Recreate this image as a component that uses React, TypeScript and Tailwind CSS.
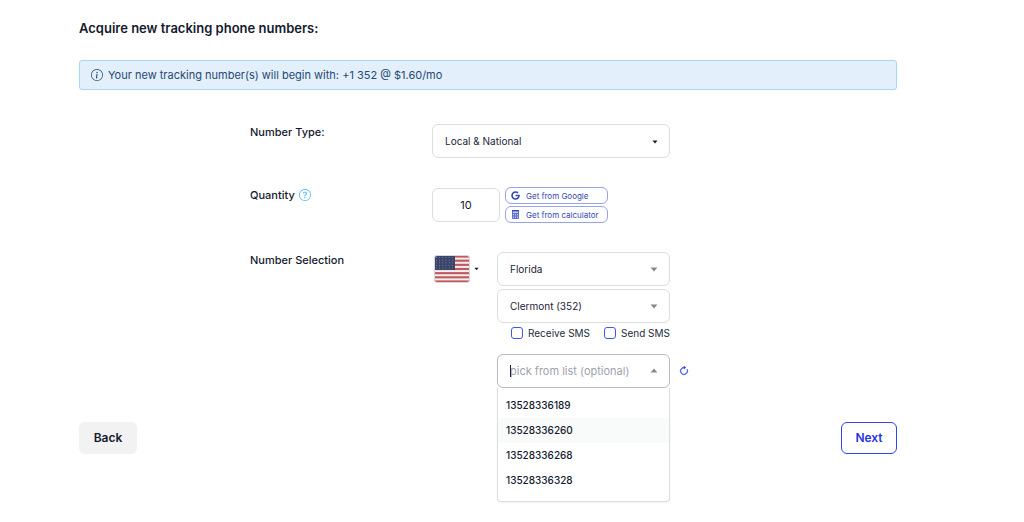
import { useState, type ReactNode, type SelectHTMLAttributes } from 'react'
import { BsArrowClockwise, BsInfoCircle, BsQuestionCircle } from 'react-icons/bs'
import { FaGoogle } from 'react-icons/fa'

const NUMBERS = ['13528336189', '13528336260', '13528336268', '13528336328']

function Caret({ className, up = false }: { className: string; up?: boolean }) {
  return (
    <svg viewBox="0 0 8 5" className={className} fill="currentColor" aria-hidden="true">
      <path d={up ? 'M0.6 4.5 L4 0.6 L7.4 4.5 Z' : 'M0.6 0.5 L4 4.4 L7.4 0.5 Z'} />
    </svg>
  )
}

function CalculatorIcon() {
  return (
    <svg viewBox="0 0 9 9" className="size-[9px]" aria-hidden="true">
      <rect x="1" width="7" height="9" rx="0.8" fill="#5f6fce" />
      <rect x="1" width="7" height="1.2" rx="0.5" fill="#3446b8" />
      <rect x="2" y="1.6" width="5" height="1.4" fill="#c9cff1" />
      {[4, 5.6, 7.2].map((y) => (
        <g key={y} fill="#c9cff1">
          <rect x="2" y={y} width="1" height="0.9" />
          <rect x="4" y={y} width="1" height="0.9" />
          <rect x="6" y={y} width="1" height="0.9" />
        </g>
      ))}
    </svg>
  )
}

interface SelectProps extends SelectHTMLAttributes<HTMLSelectElement> {
  options: string[]
  caretClass: string
}

function Select({ options, caretClass, ...rest }: SelectProps) {
  return (
    <div className="relative">
      <select
        {...rest}
        className="h-[34px] w-full appearance-none rounded-md border border-[#dcdde1] bg-white px-3 text-[10px] text-[#1b2338]"
      >
        {options.map((o) => (
          <option key={o}>{o}</option>
        ))}
      </select>
      <Caret className={caretClass} />
    </div>
  )
}

function Row({ label, htmlFor, hint, children }: { label: string; htmlFor: string; hint?: ReactNode; children: ReactNode }) {
  return (
    <div className="grid grid-cols-[182px_1fr]">
      <div className="flex h-4 items-center gap-1">
        <label htmlFor={htmlFor} className="text-[11px] font-medium">
          {label}
        </label>
        {hint}
      </div>
      {children}
    </div>
  )
}

function HelperButton({ icon, children }: { icon: ReactNode; children: ReactNode }) {
  return (
    <button
      type="button"
      className="flex h-[17px] w-[103px] items-center gap-1.5 whitespace-nowrap rounded-md border border-[#98a3e6] pl-[5px] text-[8px] text-[#3446b8]"
    >
      {icon}
      {children}
    </button>
  )
}

function UsFlag() {
  return (
    <svg viewBox="0 0 36 28" className="h-7 w-9" aria-label="United States">
      <defs>
        <clipPath id="flag-shape">
          <rect x="0.5" y="0.5" width="35" height="27" rx="2.5" />
        </clipPath>
      </defs>
      <g clipPath="url(#flag-shape)">
        <rect width="36" height="28" fill="#f4eeee" />
        {[0, 1, 2, 3, 4, 5, 6].map((i) => (
          <rect key={i} y={0.5 + i * 4.15} width="36" height="2.1" fill="#c1585c" />
        ))}
        <rect width="21" height="15" fill="#3a4468" />
        {[0, 1, 2, 3, 4].map((r) =>
          [0, 1, 2, 3, 4, 5].map((c) => (
            <circle key={`${r}-${c}`} cx={2.4 + c * 3.2} cy={2.6 + r * 2.6} r="0.5" fill="#8291ad" />
          )),
        )}
      </g>
      <rect x="0.5" y="0.5" width="35" height="27" rx="2.5" fill="none" stroke="#d9d9dc" />
    </svg>
  )
}

function SmsOption({ label }: { label: string }) {
  return (
    <label className="flex items-center gap-[5px] whitespace-nowrap text-[10px] text-[#252c40]">
      <input type="checkbox" className="size-3 appearance-none rounded-[3px] border border-[#4256ee] bg-white checked:bg-[#4256ee]" />
      {label}
    </label>
  )
}

export default function App() {
  const [quantity, setQuantity] = useState('10')
  const [picked, setPicked] = useState('')
  const [active, setActive] = useState(1)

  return (
    <main className="min-h-screen bg-white pb-16 pl-[79px] pr-[127px] pt-[18px] font-['Inter',sans-serif] text-[#131a2e]">
      <h1 className="text-[13px] font-semibold leading-5">Acquire new tracking phone numbers:</h1>

      <div className="mt-[22px] flex h-[30px] items-center gap-[5px] rounded-[3px] border border-[#a5d9f7] bg-[#e3effb] px-[11px] text-[11px] text-[#254a73]">
        <BsInfoCircle className="size-3" />
        <p>Your new tracking number(s) will begin with: +1 352 @ $1.60/mo</p>
      </div>

      <form className="mt-[34px]" onSubmit={(e) => e.preventDefault()}>
        <div className="flex flex-col gap-[29px] pl-[171px]">
          <Row label="Number Type:" htmlFor="number-type">
            <div className="w-[238px]">
              <Select id="number-type" options={['Local & National', 'Toll Free']} caretClass="pointer-events-none absolute right-3 top-4 h-1 w-1.5" />
            </div>
          </Row>

          <Row
            label="Quantity"
            htmlFor="quantity"
            hint={<BsQuestionCircle className="size-3 text-[#3fb4f5]" />}
          >
            <div className="flex items-center gap-[5px]">
              <input
                id="quantity"
                value={quantity}
                onChange={(e) => setQuantity(e.target.value)}
                className="h-[34px] w-[68px] rounded-md border border-[#dcdde1] text-center text-[11px]"
              />
              <div className="flex flex-col gap-0.5">
                <HelperButton icon={<FaGoogle className="size-[9px]" />}>Get from Google</HelperButton>
                <HelperButton icon={<CalculatorIcon />}>Get from calculator</HelperButton>
              </div>
            </div>
          </Row>

          <Row label="Number Selection" htmlFor="number-pick">
            <div className="flex items-start">
              <button type="button" aria-label="Country" className="flex w-[65px] items-center gap-1 pl-0.5 pt-[3px]">
                <UsFlag />
                <Caret className="h-1 w-[5px]" />
              </button>
              <div className="w-[173px]">
                <div className="flex flex-col gap-[3px]">
                  <Select aria-label="State" options={['Florida', 'Georgia']} caretClass="pointer-events-none absolute right-3 top-[15px] h-[5px] w-2 text-[#85878f]" />
                  <Select aria-label="Area" options={['Clermont (352)', 'Miami (305)']} caretClass="pointer-events-none absolute right-3 top-[15px] h-[5px] w-2 text-[#85878f]" />
                </div>
                <div className="mt-0.5 flex h-4 items-center justify-end gap-[14px]">
                  <SmsOption label="Receive SMS" />
                  <SmsOption label="Send SMS" />
                </div>

                <div className="relative mt-[13px]">
                  <input
                    id="number-pick"
                    role="combobox"
                    aria-expanded="true"
                    aria-controls="number-list"
                    placeholder="pick from list (optional)"
                    value={picked}
                    onChange={(e) => setPicked(e.target.value)}
                    className="h-[34px] w-full rounded-md border border-[#b9bac2] bg-white pl-3 pr-6 text-[11px] caret-transparent outline-none placeholder:text-[#a0a2ab]"
                  />
                  {!picked && <span className="pointer-events-none absolute left-[13px] top-[11px] h-3 w-px bg-[#1b2338]" />}
                  <Caret up className="pointer-events-none absolute right-3 top-[14px] h-[5px] w-2 text-[#85878f]" />
                  <ul
                    id="number-list"
                    role="listbox"
                    className="absolute inset-x-0 top-full h-[114px] rounded-b border border-t-0 border-[#dcdde1] bg-white pt-[5px] text-[10px] font-medium shadow-xs"
                  >
                    {NUMBERS.map((n, i) => (
                      <li
                        key={n}
                        role="option"
                        aria-selected={i === active}
                        onMouseEnter={() => setActive(i)}
                        onClick={() => setPicked(n)}
                        className={`flex h-[25px] items-center px-2 ${i === active ? 'bg-[#f9fafa]' : ''}`}
                      >
                        {n}
                      </li>
                    ))}
                  </ul>
                </div>
              </div>
              <button type="button" aria-label="Refresh numbers" className="ml-[9px] self-end pb-3 text-[#2f43ee]">
                <BsArrowClockwise className="size-2.5 stroke-[0.7]" />
              </button>
            </div>
          </Row>
        </div>

        <div className="mt-[34px] flex justify-between text-xs font-semibold">
          <button type="button" className="h-8 w-[58px] rounded-md bg-[#f2f2f2]">
            Back
          </button>
          <button type="submit" className="h-8 w-14 rounded-md border border-[#2f43ee] bg-white text-[#2433e0]">
            Next
          </button>
        </div>
      </form>
    </main>
  )
}
